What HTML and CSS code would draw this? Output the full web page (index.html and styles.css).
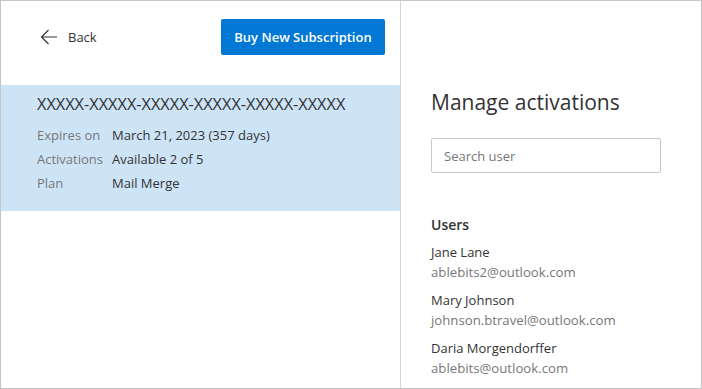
FILE: index.html
```html
<!DOCTYPE html>
<html lang="en">
<head>
<meta charset="UTF-8">
<meta name="viewport" content="width=device-width, initial-scale=1.0">
<title>Manage activations</title>
<link rel="stylesheet" href="styles.css">
</head>
<body>
<div class="frame">
    <div class="left">
        <div class="topbar">
            <a class="back" href="#">
                <svg width="18" height="16" viewBox="0 0 18 16"><path d="M17 8H1.5M8.5 1L1.5 8l7 7" fill="none" stroke="#333" stroke-width="1.2"/></svg>
                <span>Back</span>
            </a>
            <button class="btn-buy">Buy New Subscription</button>
        </div>
        <div class="license">
            <div class="license-key">XXXXX-XXXXX-XXXXX-XXXXX-XXXXX-XXXXX</div>
            <div class="info-row"><span class="info-label">Expires on</span><span>March 21, 2023 (357 days)</span></div>
            <div class="info-row"><span class="info-label">Activations</span><span>Available 2 of 5</span></div>
            <div class="info-row"><span class="info-label">Plan</span><span>Mail Merge</span></div>
        </div>
    </div>
    <div class="right">
        <h1>Manage activations</h1>
        <input class="search" type="text" placeholder="Search user">
        <h2>Users</h2>
        <div class="user">
            <div class="user-name">Jane Lane</div>
            <div class="user-mail">ablebits2@outlook.com</div>
        </div>
        <div class="user">
            <div class="user-name">Mary Johnson</div>
            <div class="user-mail">johnson.btravel@outlook.com</div>
        </div>
        <div class="user">
            <div class="user-name">Daria Morgendorffer</div>
            <div class="user-mail">ablebits@outlook.com</div>
        </div>
    </div>
</div>
</body>
</html>
```

FILE: styles.css
```css
body {
    margin: 0;
    font-family: "Open Sans", Arial, sans-serif;
    color: #333;
    background-color: #fff;
}
.frame {
    display: flex;
    width: 702px;
    height: 389px;
    box-sizing: border-box;
    border: 1px solid #c4c4c4;
    overflow: hidden;
}
.left {
    width: 399px;
    border-right: 1px solid #d6d6d6;
}
.topbar {
    display: flex;
    align-items: center;
    justify-content: space-between;
    height: 84px;
    padding: 18px 15px 30px 39px;
    box-sizing: border-box;
}
.back {
    display: flex;
    align-items: center;
    gap: 10px;
    color: #333;
    text-decoration: none;
    font-size: 13px;
}
.btn-buy {
    width: 164px;
    height: 36px;
    border: none;
    border-radius: 2px;
    background-color: #0078d4;
    color: #fff;
    font-family: inherit;
    font-size: 13px;
    font-weight: 600;
    cursor: pointer;
}
.license {
    background-color: #cde4f7;
    height: 126px;
    padding: 8px 0 0 36px;
    box-sizing: border-box;
}
.license-key {
    font-size: 16.3px;
    line-height: 22px;
    margin-bottom: 8px;
}
.info-row {
    display: flex;
    font-size: 13px;
    line-height: 24px;
}
.info-label {
    width: 75px;
    color: #777;
}
.right {
    flex: 1;
    padding: 0 0 0 30px;
}
h1 {
    font-size: 21px;
    font-weight: 400;
    margin: 87px 0 22px;
    line-height: 28px;
}
.search {
    display: block;
    width: 230px;
    height: 35px;
    box-sizing: border-box;
    border: 1px solid #c8c8c8;
    border-radius: 2px;
    padding: 0 12px;
    font-family: inherit;
    font-size: 13px;
}
.search::placeholder {
    color: #777;
}
h2 {
    font-size: 14px;
    font-weight: 600;
    margin: 40px 0 5px;
    line-height: 24px;
}
.user {
    font-size: 13px;
    line-height: 20px;
    margin-bottom: 8px;
}
.user-mail {
    color: #777;
    font-size: 13.2px;
}
```
